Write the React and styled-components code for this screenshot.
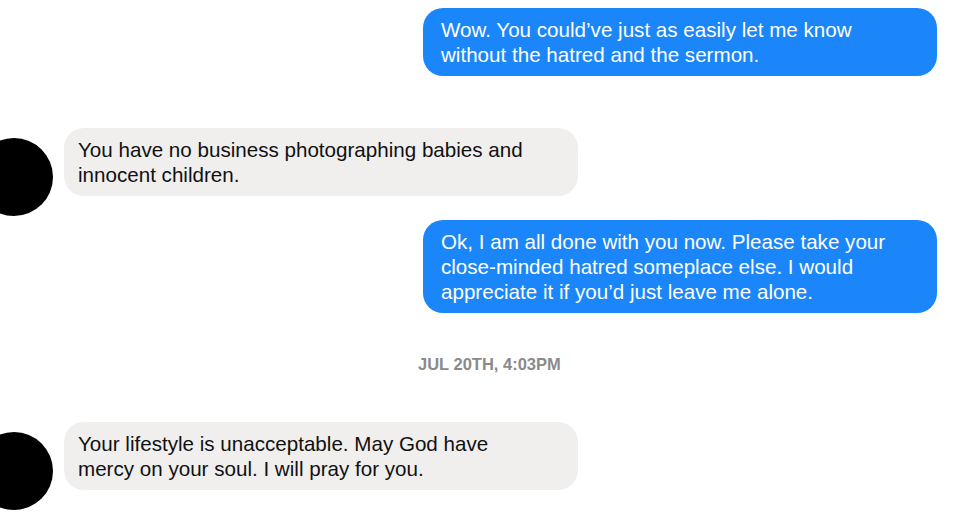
import React from 'react'
import styled, { createGlobalStyle } from 'styled-components'

const messages = [
  { id: 1, type: 'out', lines: ['Wow. You could’ve just as easily let me know', 'without the hatred and the sermon.'], mt: 8 },
  { id: 2, type: 'in', lines: ['You have no business photographing babies and', 'innocent children.'], mt: 52 },
  { id: 3, type: 'out', lines: ['Ok, I am all done with you now. Please take your', 'close-minded hatred someplace else. I would', 'appreciate it if you’d just leave me alone.'], mt: 4 },
  { id: 4, type: 'stamp', text: 'JUL 20TH, 4:03PM', mt: 40 },
  { id: 5, type: 'in', lines: ['Your lifestyle is unacceptable. May God have', 'mercy on your soul. I will pray for you.'], mt: 47 },
]

const Lines = ({ lines }) => lines.map((l, i) => <div key={i}>{l}</div>)

export default () => (
  <>
    <Global />
    <Thread>
      {messages.map((m) => {
        if (m.type === 'stamp') return <Stamp key={m.id} $mt={m.mt}>{m.text}</Stamp>
        if (m.type === 'out') return (
          <OutRow key={m.id} $mt={m.mt}>
            <Bubble $out>
              <Lines lines={m.lines} />
            </Bubble>
          </OutRow>
        )
        return (
          <InRow key={m.id} $mt={m.mt}>
            <Avatar />
            <Bubble>
              <Lines lines={m.lines} />
            </Bubble>
          </InRow>
        )
      })}
    </Thread>
  </>
)

const Global = createGlobalStyle`
  body {
    margin: 0;
    background: #fff;
    font-family: "Liberation Sans", Arial, sans-serif;
  }
`

const Thread = styled.div`
  width: 960px;
  height: 513px;
  overflow: hidden;
  display: flex;
  flex-direction: column;
`

const OutRow = styled.div`
  display: flex;
  justify-content: flex-end;
  padding-right: 23px;
  margin-top: ${(p) => p.$mt}px;
`

const InRow = styled.div`
  display: flex;
  align-items: flex-start;
  gap: 11px;
  margin-top: ${(p) => p.$mt}px;
`

const Avatar = styled.div`
  width: 78px;
  height: 78px;
  margin-left: -25px;
  margin-top: 10px;
  border-radius: 50%;
  background: #000;
  flex-shrink: 0;
`

const Bubble = styled.div`
  box-sizing: border-box;
  width: 514px;
  padding: 9px ${(p) => (p.$out ? '18px' : '14px')};
  border-radius: 20px;
  font-size: 20.6px;
  line-height: 25px;
  background: ${(p) => (p.$out ? '#1a86f9' : '#f0efee')};
  color: ${(p) => (p.$out ? '#fff' : '#111')};
`

const Stamp = styled.div`
  margin-top: ${(p) => p.$mt}px;
  margin-left: 418px;
  height: 22px;
  line-height: 22px;
  font-size: 16.5px;
  font-weight: bold;
  color: #8a8a8a;
`
